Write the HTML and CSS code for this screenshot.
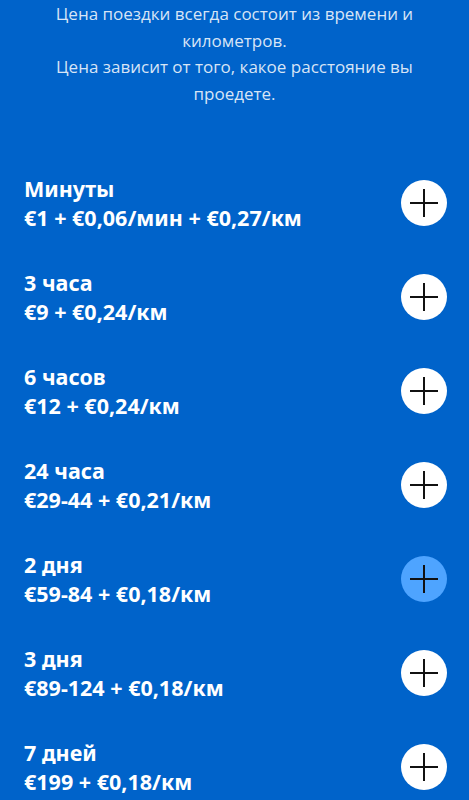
FILE: index.html
```html
<!DOCTYPE html>
<html lang="ru">
<head>
<meta charset="utf-8">
<link rel="stylesheet" href="styles.css">
</head>
<body>
<div class="intro">
  <p>Цена поездки всегда состоит из времени и километров.</p>
  <p>Цена зависит от того, какое расстояние вы проедете.</p>
</div>
<ul class="tariffs">
  <li class="tariff"><div class="info"><div class="name">Минуты</div><div class="price">€1 + €0,06/мин + €0,27/км</div></div><button class="add"><svg viewBox="0 0 46 46"><path d="M9 23H37M23 9V37"/></svg></button></li>
  <li class="tariff"><div class="info"><div class="name">3 часа</div><div class="price">€9 + €0,24/км</div></div><button class="add"><svg viewBox="0 0 46 46"><path d="M9 23H37M23 9V37"/></svg></button></li>
  <li class="tariff"><div class="info"><div class="name">6 часов</div><div class="price">€12 + €0,24/км</div></div><button class="add"><svg viewBox="0 0 46 46"><path d="M9 23H37M23 9V37"/></svg></button></li>
  <li class="tariff"><div class="info"><div class="name">24 часа</div><div class="price">€29-44 + €0,21/км</div></div><button class="add"><svg viewBox="0 0 46 46"><path d="M9 23H37M23 9V37"/></svg></button></li>
  <li class="tariff"><div class="info"><div class="name">2 дня</div><div class="price">€59-84 + €0,18/км</div></div><button class="add active"><svg viewBox="0 0 46 46"><path d="M9 23H37M23 9V37"/></svg></button></li>
  <li class="tariff"><div class="info"><div class="name">3 дня</div><div class="price">€89-124 + €0,18/км</div></div><button class="add"><svg viewBox="0 0 46 46"><path d="M9 23H37M23 9V37"/></svg></button></li>
  <li class="tariff"><div class="info"><div class="name">7 дней</div><div class="price">€199 + €0,18/км</div></div><button class="add"><svg viewBox="0 0 46 46"><path d="M9 23H37M23 9V37"/></svg></button></li>
</ul>
</body>
</html>
```
FILE: styles.css
```css
html, body {
  margin: 0;
  padding: 0;
  background: #0063ca;
}
body {
  font-family: "Open Sans", "Noto Sans", sans-serif;
  color: #fff;
}
.intro {
  padding: 1px 40px 0;
  text-align: center;
  color: rgba(255, 255, 255, 0.85);
  font-size: 17px;
  line-height: 26.5px;
}
.intro p {
  margin: 0;
}
.tariffs {
  list-style: none;
  margin: 49px 0 0;
  padding: 0;
}
.tariff {
  height: 94px;
  display: flex;
  align-items: center;
  justify-content: space-between;
  padding: 0 22px 0 24px;
}
.info {
  font-family: "Noto Sans", sans-serif;
  font-weight: 700;
  font-size: 21.5px;
  line-height: 29px;
}
.add {
  width: 46px;
  height: 46px;
  border: none;
  border-radius: 50%;
  background: #fff;
  padding: 0;
  display: flex;
  align-items: center;
  justify-content: center;
}
.add.active {
  background: #4ea4ff;
}
.add svg {
  width: 46px;
  height: 46px;
  stroke: #111;
  stroke-width: 2;
  fill: none;
}
```
